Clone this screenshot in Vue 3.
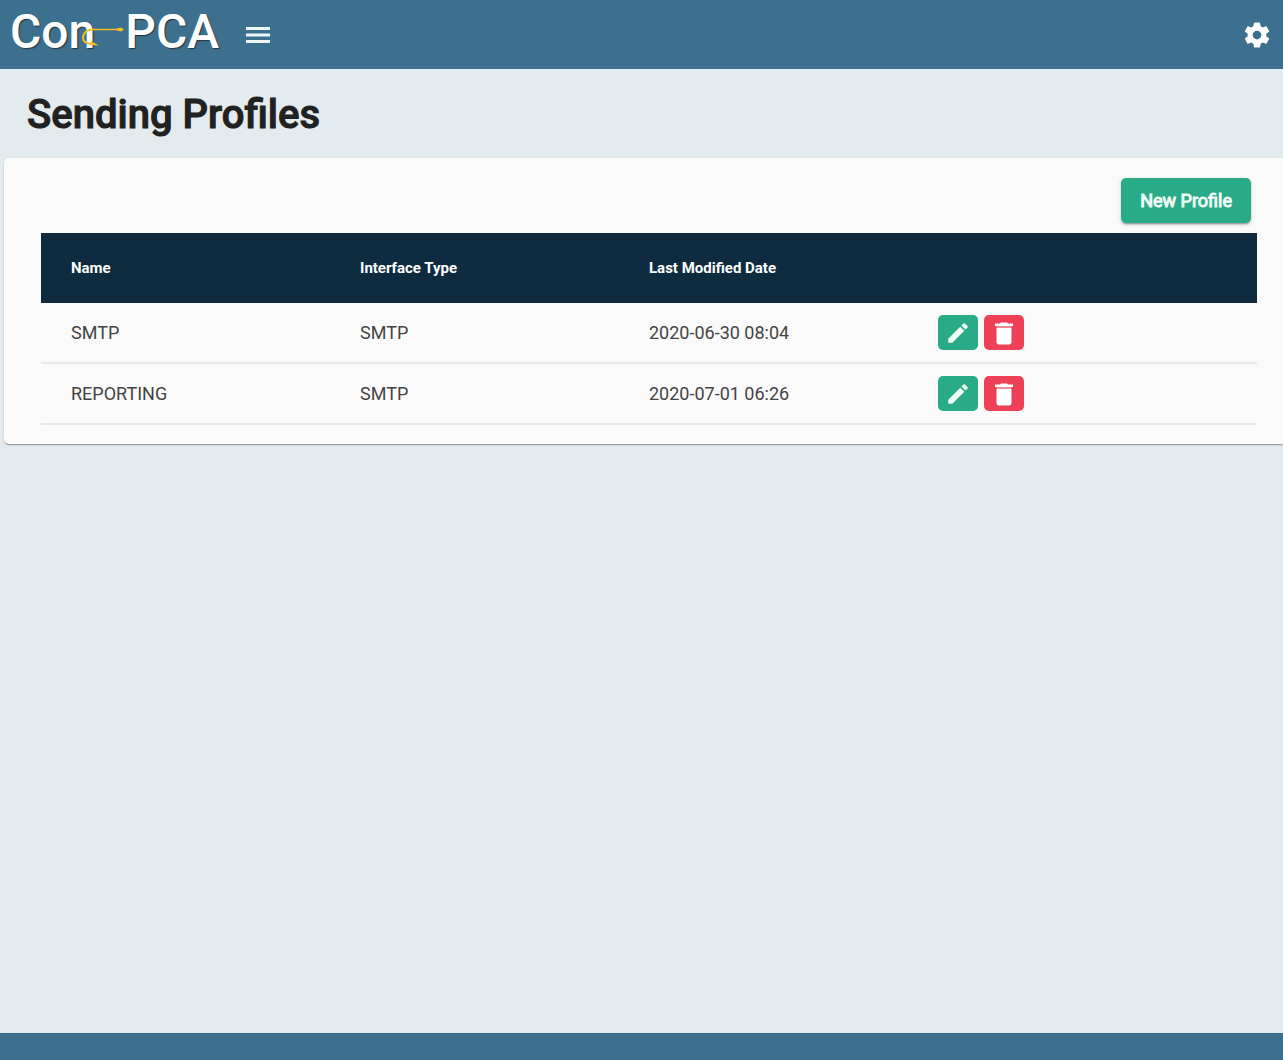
<script setup>
const profiles = [
  { name: 'SMTP', type: 'SMTP', modified: '2020-06-30 08:04' },
  { name: 'REPORTING', type: 'SMTP', modified: '2020-07-01 06:26' },
]
</script>

<template>
  <div class="app">
    <header class="topbar">
      <a class="logo" href="#" aria-label="Con-PCA">
        <span>Con</span>
        <svg class="hook" width="44" height="22" viewBox="0 0 44 22" fill="none" aria-hidden="true">
          <path d="M10 3.500C5 4 2 8 2 12c0 4 3 6 11 6" stroke="#f5bd20" stroke-width="2" />
          <path d="M10 15l8 4.500-8-.5z" fill="#f5bd20" />
          <path d="M9 3.500h31" stroke="#f5bd20" stroke-width="1.500" />
          <path d="M36 2.500l4-1 3 2-3 2-4-1z" fill="#f5bd20" />
        </svg>
        <span>PCA</span>
      </a>
      <button class="icon-button" type="button" aria-label="Menu">
        <svg width="24" height="16" viewBox="0 0 24 16" aria-hidden="true">
          <path d="M0 0h24v3H0zM0 6.500h24v3H0zM0 13h24v3H0z" fill="#eef6fa" />
        </svg>
      </button>
      <button class="icon-button settings" type="button" aria-label="Settings">
        <svg width="30" height="30" viewBox="0 0 24 24" aria-hidden="true">
          <path fill="#fff" d="M19.430 12.980c.04-.32.070-.64.070-.98s-.03-.66-.07-.98l2.110-1.650c.19-.15.24-.42.120-.64l-2-3.460c-.12-.22-.39-.3-.61-.22l-2.490 1c-.52-.4-1.080-.73-1.690-.98l-.38-2.650C14.460 2.180 14.250 2 14 2h-4c-.25 0-.46.18-.49.42l-.38 2.650c-.61.25-1.170.59-1.690.98l-2.490-1c-.23-.09-.49 0-.61.22l-2 3.460c-.13.22-.07.49.12.64l2.110 1.650c-.04.32-.07.65-.07.98s.03.66.07.98l-2.110 1.650c-.19.15-.24.42-.12.64l2 3.460c.12.22.39.3.61.22l2.490-1c.52.4 1.080.73 1.690.98l.38 2.650c.03.24.24.42.49.42h4c.25 0 .46-.18.49-.42l.38-2.650c.61-.25 1.170-.59 1.690-.98l2.490 1c.23.09.49 0 .61-.22l2-3.460c.12-.22.07-.49-.12-.64l-2.110-1.650zM12 15.500c-1.930 0-3.500-1.570-3.500-3.500s1.570-3.500 3.500-3.500 3.500 1.570 3.500 3.500-1.570 3.500-3.500 3.500z" />
        </svg>
      </button>
    </header>

    <main>
      <h1>Sending Profiles</h1>
      <section class="card">
        <div class="actions">
          <button class="new-profile" type="button">New Profile</button>
        </div>
        <table>
          <thead>
            <tr>
              <th scope="col">Name</th>
              <th scope="col">Interface Type</th>
              <th scope="col">Last Modified Date</th>
              <td></td>
            </tr>
          </thead>
          <tbody>
            <tr v-for="profile in profiles" :key="profile.name">
              <td>{{ profile.name }}</td>
              <td>{{ profile.type }}</td>
              <td>{{ profile.modified }}</td>
              <td class="row-actions">
                <button class="edit" type="button" :aria-label="`Edit ${profile.name}`">
                  <svg width="26" height="26" viewBox="0 0 24 24" aria-hidden="true">
                    <path fill="#effcf5" d="M3 17.250V21h3.750L17.810 9.940l-3.750-3.750L3 17.250zM20.710 7.040c.39-.39.39-1.020 0-1.410l-2.340-2.340c-.39-.39-1.020-.39-1.410 0l-1.830 1.830 3.750 3.750 1.830-1.830z" />
                  </svg>
                </button>
                <button class="delete" type="button" :aria-label="`Delete ${profile.name}`">
                  <svg width="20" height="24" viewBox="0 0 20 24" aria-hidden="true">
                    <path fill="#fff" d="M2.500 7h15v14c0 1.500-1 2.500-2.500 2.500H5c-1.500 0-2.500-1-2.500-2.500zM1 2.500h5l1-1h6l1 1h5V5H1z" />
                    <path fill="#f58b98" d="M2.500 5h15v2h-15z" />
                  </svg>
                </button>
              </td>
            </tr>
          </tbody>
        </table>
      </section>
    </main>

    <footer></footer>
  </div>
</template>

<style>
body {
  margin: 0;
}
</style>

<style scoped>
.app {
  display: flex;
  flex-direction: column;
  min-height: 100vh;
  background: #e4ebee;
  color: #212121;
  font-family: Roboto, sans-serif;
}

button {
  border: 0;
  padding: 0;
  font-family: inherit;
  cursor: pointer;
}

svg {
  display: block;
}

.topbar {
  display: flex;
  align-items: center;
  box-sizing: border-box;
  height: 69px;
  padding: 1px 11px 0 10px;
  background: #3d6f8e;
}

.logo {
  position: relative;
  display: flex;
  gap: 30px;
  height: 68px;
  color: #fff;
  font-size: 48px;
  font-weight: 500;
  line-height: 62px;
  text-decoration: none;
  text-shadow: 1px 1px 1px #26343c;
}

.hook {
  position: absolute;
  top: 25px;
  left: 71px;
}

.icon-button {
  display: flex;
  margin-left: 27px;
  background: none;
}

.settings {
  margin-left: auto;
}

h1 {
  margin: 0;
  padding: 21px 27px 18px;
  font-size: 40px;
  font-weight: 500;
  line-height: 50px;
  -webkit-text-stroke: 1px #212121;
}

.card {
  margin-left: 4px;
  padding: 20px 26px 19px 37px;
  border-radius: 5px 0 0 5px;
  background: #fafafa;
  box-shadow: 0 2px 1px -1px rgba(0, 0, 0, 0.2), 0 1px 1px rgba(0, 0, 0, 0.14), 0 1px 3px rgba(0, 0, 0, 0.12);
}

.actions {
  display: flex;
  justify-content: flex-end;
  padding: 0 6px 10px;
}

.new-profile {
  height: 45px;
  padding: 0 19px;
  border-radius: 5px;
  background: #2aab88;
  box-shadow: 0 3px 1px -2px rgba(0, 0, 0, 0.2), 0 2px 2px rgba(0, 0, 0, 0.14), 0 1px 5px rgba(0, 0, 0, 0.12);
  color: #effcf5;
  font-size: 18px;
  font-weight: 400;
  -webkit-text-stroke: 1px #effcf5;
}

table,
thead,
tbody {
  display: block;
}

tr {
  display: flex;
  align-items: center;
  box-sizing: border-box;
  padding: 0 30px;
}

th,
td {
  flex: 1 1 0;
  padding: 0;
  text-align: left;
}

thead tr {
  height: 70px;
  background: #0e2b40;
}

th {
  color: #fff;
  font-size: 15px;
  font-weight: 700;
}

tbody tr {
  height: 61px;
  border-bottom: 2px solid #e8e8e8;
}

tbody td {
  color: #444;
  font-size: 18px;
}

.row-actions {
  display: flex;
  gap: 6px;
}

.edit,
.delete {
  display: flex;
  align-items: center;
  justify-content: center;
  width: 40px;
  height: 35px;
  border-radius: 5px;
}

.edit {
  background: #2aab88;
}

.delete {
  background: #ee4056;
}

footer {
  height: 27px;
  margin-top: auto;
  background: #3d6f8e;
}
</style>
